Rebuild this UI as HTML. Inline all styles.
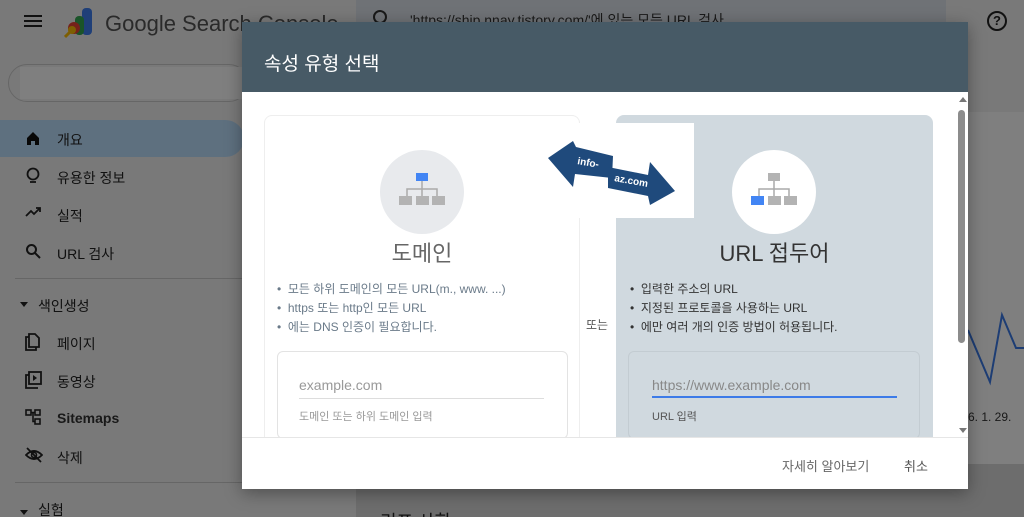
<!DOCTYPE html>
<html><head><meta charset="utf-8"><style>
*{margin:0;padding:0;box-sizing:border-box}
html,body{width:1024px;height:517px;overflow:hidden;background:#f3f3f3}
body{font-family:"Liberation Sans","Noto Sans CJK KR",sans-serif;position:relative}
.abs{position:absolute}
.nav{left:0;width:356px;color:#222;font-size:14px}
.nav div.it{position:absolute;left:57px}
.ic{position:absolute;left:25px}
</style></head><body>
<!-- background app (light, under scrim) -->
<div class="abs" style="left:356px;top:0;width:668px;height:517px;background:#f3f3f3"></div>
<div class="abs" style="left:356px;top:0;width:590px;height:44px;background:#dfe5ec;border-radius:0 0 24px 0"></div>
<div class="abs" style="left:410px;top:10px;font-size:14px;color:#333">'https://ship.nnay.tistory.com/'에 있는 모든 URL 검사</div>
<div class="abs" style="left:373px;top:10px;width:14px;height:14px;border:2px solid #333;border-radius:50%"></div>
<div class="abs" style="left:987px;top:11px;width:20px;height:20px;border:2px solid #222;border-radius:50%;font-size:13px;text-align:center;line-height:16px;color:#222;font-weight:bold">?</div>
<div class="abs" style="left:356px;top:112px;width:668px;height:352px;background:#ffffff"></div>
<div class="abs" style="left:356px;top:464px;width:668px;height:53px;background:#dadada"></div>
<div class="abs" style="left:380px;top:508px;font-size:18px;color:#222">리프 사항</div>
<svg class="abs" style="left:968px;top:300px" width="56" height="90"><polyline points="0,30 22,82 34,15 48,48 56,48" fill="none" stroke="#3b7ae8" stroke-width="2"/></svg>
<div class="abs" style="left:968px;top:410px;font-size:12px;color:#333">6. 1. 29.</div>

<div class="abs" style="left:24px;top:15px;width:18px;height:2px;background:#222;box-shadow:0 5px 0 #222,0 10px 0 #222"></div>
<svg class="abs" style="left:64px;top:7px" width="32" height="32"><rect x="18" y="1" width="10" height="27" rx="4" fill="#3f7ef0"/><rect x="11" y="9" width="9" height="19" rx="4" fill="#34a853"/><circle cx="10" cy="21" r="6" fill="#ea4335"/><line x1="6" y1="25" x2="1" y2="30" stroke="#fbbc05" stroke-width="3"/><circle cx="8" cy="23" r="4" fill="#fbbc05"/></svg>
<div class="abs" style="left:105px;top:11px;font-size:22px;color:#555">Google Search Console</div>
<div class="abs" style="left:8px;top:64px;width:240px;height:38px;border:1px solid #ccc;border-radius:19px;background:#f3f3f3"></div>
<div class="abs" style="left:20px;top:67px;width:222px;height:32px;background:#ffffff"></div>
<div class="abs" style="left:0;top:120px;width:244px;height:37px;background:#bde0fe;border-radius:0 19px 19px 0"></div>
<div class="nav abs" style="top:0;height:517px">
<svg class="ic" style="top:130px" width="16" height="16"><path d="M2 8 L8 2 L14 8 V15 H10 V11 H6 V15 H2Z" fill="#111"/></svg>
<div class="it" style="top:130px">개요</div>
<svg class="ic" style="top:167px" width="16" height="18"><circle cx="8" cy="7" r="5.5" fill="none" stroke="#222" stroke-width="1.8"/><line x1="5" y1="15" x2="11" y2="15" stroke="#222" stroke-width="1.8"/></svg>
<div class="it" style="top:168px">유용한 정보</div>
<svg class="ic" style="top:206px" width="18" height="12"><polyline points="1,10 6,5 9,8 15,2" fill="none" stroke="#222" stroke-width="1.8"/><polyline points="11,2 15,2 15,6" fill="none" stroke="#222" stroke-width="1.8"/></svg>
<div class="it" style="top:206px">실적</div>
<svg class="ic" style="top:243px" width="16" height="16"><circle cx="6.5" cy="6.5" r="4.5" fill="none" stroke="#222" stroke-width="2"/><line x1="10" y1="10" x2="15" y2="15" stroke="#222" stroke-width="2"/></svg>
<div class="it" style="top:244px">URL 검사</div>
<div class="abs" style="left:15px;top:278px;width:340px;height:1px;background:#ccc"></div>
<div class="abs" style="left:20px;top:302px;border:4px solid transparent;border-top:5px solid #222"></div>
<div class="abs" style="left:38px;top:296px">색인생성</div>
<svg class="ic" style="top:333px" width="16" height="18"><path d="M4 4 H1 V17 H11 V14" fill="none" stroke="#222" stroke-width="1.8"/><path d="M4 1 H10 L14 5 V14 H4Z" fill="none" stroke="#222" stroke-width="1.8"/></svg>
<div class="it" style="top:334px">페이지</div>
<svg class="ic" style="top:371px" width="17" height="18"><path d="M4 4 H1 V17 H13" fill="none" stroke="#222" stroke-width="1.8"/><rect x="4" y="1" width="12" height="12" fill="none" stroke="#222" stroke-width="1.8"/><path d="M8 4 L12 7 L8 10Z" fill="#222"/></svg>
<div class="it" style="top:372px">동영상</div>
<svg class="ic" style="top:409px" width="17" height="17"><rect x="1" y="1" width="5" height="5" fill="none" stroke="#222" stroke-width="1.6"/><rect x="10" y="1" width="5" height="5" fill="none" stroke="#222" stroke-width="1.6"/><rect x="10" y="10" width="5" height="5" fill="none" stroke="#222" stroke-width="1.6"/><path d="M6 3.5H10M8 3.5V12.5H10" fill="none" stroke="#222" stroke-width="1.6"/></svg>
<div class="it" style="top:410px;font-weight:bold;color:#333">Sitemaps</div>
<svg class="ic" style="top:447px" width="18" height="16"><path d="M1 8 Q9 0 17 8 Q9 16 1 8Z" fill="none" stroke="#222" stroke-width="1.8"/><circle cx="9" cy="8" r="2.5" fill="none" stroke="#222" stroke-width="1.6"/><line x1="2" y1="1" x2="16" y2="15" stroke="#222" stroke-width="1.8"/></svg>
<div class="it" style="top:448px">삭제</div>
<div class="abs" style="left:15px;top:482px;width:340px;height:1px;background:#ccc"></div>
<div class="abs" style="left:20px;top:510px;border:4px solid transparent;border-top:5px solid #222"></div>
<div class="abs" style="left:38px;top:500px">실험</div>
</div>

<!-- scrim -->
<div class="abs" style="left:0;top:0;width:1024px;height:517px;background:rgba(0,0,0,0.5)"></div>

<!-- modal -->
<div class="abs" style="left:242px;top:22px;width:726px;height:467px;background:#fff;box-shadow:0 4px 16px rgba(0,0,0,.35)">
<div style="height:70px;background:#475a66;color:#fff;font-size:19px;padding:27px 0 0 22px">속성 유형 선택</div>
<div class="abs" style="left:717px;top:75px;border:4px solid transparent;border-bottom:5px solid #777;border-top:0"></div>
<div class="abs" style="left:716px;top:88px;width:7px;height:233px;background:#8c8c8c;border-radius:4px"></div>
<div class="abs" style="left:717px;top:406px;border:4px solid transparent;border-top:5px solid #777"></div>
<div class="abs" style="left:22px;top:93px;width:316px;height:330px;border:1px solid #eee;border-bottom:none;border-radius:8px 8px 0 0"></div>
<div class="abs" style="left:138px;top:128px;width:84px;height:84px;border-radius:50%;background:#e8eaed"></div>
<svg class="abs" style="left:156px;top:150px" width="50" height="36"><rect x="18" y="1" width="12" height="8" fill="#4285f4"/><path d="M24 9V17M9 24V17H39V24M24 17V24" fill="none" stroke="#aaa" stroke-width="1.5"/><rect x="1" y="24" width="13" height="9" fill="#b3b3b3"/><rect x="18" y="24" width="13" height="9" fill="#b3b3b3"/><rect x="34" y="24" width="13" height="9" fill="#b3b3b3"/></svg>
<div class="abs" style="left:22px;top:214px;width:316px;text-align:center;font-size:22px;color:#666">도메인</div>
<div class="abs" style="left:35px;top:258px;font-size:12px;line-height:19px;color:#6a7a89">• &nbsp;모든 하위 도메인의 모든 URL(m., www. ...)<br>• &nbsp;https 또는 http인 모든 URL<br>• &nbsp;에는 DNS 인증이 필요합니다.</div>
<div class="abs" style="left:35px;top:329px;width:291px;height:88px;border:1px solid #e3e3e3;border-radius:6px"></div>
<div class="abs" style="left:57px;top:355px;font-size:14px;color:#999">example.com</div>
<div class="abs" style="left:57px;top:376px;width:245px;height:1px;background:#ddd"></div>
<div class="abs" style="left:57px;top:386px;font-size:11px;color:#999">도메인 또는 하위 도메인 입력</div>
<div class="abs" style="left:344px;top:294px;font-size:12px;color:#555">또는</div>
<div class="abs" style="left:374px;top:93px;width:317px;height:330px;background:#d0d9df;border-radius:8px 8px 0 0"></div>
<div class="abs" style="left:490px;top:128px;width:84px;height:84px;border-radius:50%;background:#fff"></div>
<svg class="abs" style="left:508px;top:150px" width="50" height="36"><rect x="18" y="1" width="12" height="8" fill="#b3b3b3"/><path d="M24 9V17M9 24V17H39V24M24 17V24" fill="none" stroke="#aaa" stroke-width="1.5"/><rect x="1" y="24" width="13" height="9" fill="#4285f4"/><rect x="18" y="24" width="13" height="9" fill="#b3b3b3"/><rect x="34" y="24" width="13" height="9" fill="#b3b3b3"/></svg>
<div class="abs" style="left:374px;top:214px;width:317px;text-align:center;font-size:22px;color:#333">URL 접두어</div>
<div class="abs" style="left:388px;top:258px;font-size:12px;line-height:19px;color:#333">• &nbsp;입력한 주소의 URL<br>• &nbsp;지정된 프로토콜을 사용하는 URL<br>• &nbsp;에만 여러 개의 인증 방법이 허용됩니다.</div>
<div class="abs" style="left:386px;top:329px;width:292px;height:88px;border:1px solid #c3ccd2;border-radius:6px"></div>
<div class="abs" style="left:410px;top:355px;font-size:14px;color:#888">https://www.example.com</div>
<div class="abs" style="left:410px;top:374px;width:245px;height:2px;background:#3c7be8"></div>
<div class="abs" style="left:410px;top:386px;font-size:11px;color:#555">URL 입력</div>
<div class="abs" style="left:0;top:415px;width:726px;height:52px;background:#fff;border-top:1px solid #e6e6e6"></div>
<div class="abs" style="left:540px;top:434px;font-size:13px;color:#666">자세히 알아보기</div>
<div class="abs" style="left:662px;top:434px;font-size:13px;color:#555">취소</div>
<div class="abs" style="left:304px;top:101px;width:148px;height:95px;background:#fff"></div>
<svg class="abs" style="left:304px;top:101px" width="148" height="100"><polygon points="2,35 27,18 30,24 67,33 66,55 29,51 27,64" fill="#1f4a7c"/><polygon points="62,44 102,52 104,39 129,68 104,82 102,73 62,65" fill="#1f4a7c"/><text x="31" y="41" font-family="Liberation Sans" font-weight="bold" font-size="10" fill="#fff" transform="rotate(10 31 41)">info-</text><text x="68" y="58" font-family="Liberation Sans" font-weight="bold" font-size="10" fill="#fff" transform="rotate(10 68 58)">az.com</text></svg>
</div>
</body></html>
